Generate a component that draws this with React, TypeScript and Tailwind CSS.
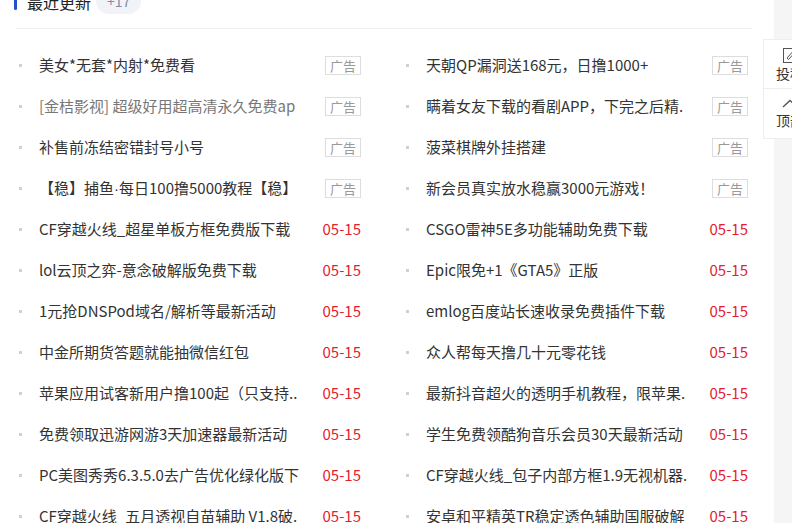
import React from "react"

type Item = { title: React.ReactNode; ad?: boolean; dim?: boolean; date?: string }

const dot = <span style={{ fontFamily: '"Liberation Sans", sans-serif' }}>·</span>

const left: Item[] = [
  { title: "美女*无套*内射*免费看", ad: true },
  { title: "[金桔影视] 超级好用超高清永久免费ap", ad: true, dim: true },
  { title: "补售前冻结密错封号小号", ad: true },
  { title: <>【稳】捕鱼{dot}每日100撸5000教程【稳】</>, ad: true },
  { title: "CF穿越火线_超星单板方框免费版下载", date: "05-15" },
  { title: "lol云顶之弈-意念破解版免费下载", date: "05-15" },
  { title: "1元抢DNSPod域名/解析等最新活动", date: "05-15" },
  { title: "中金所期货答题就能抽微信红包", date: "05-15" },
  { title: "苹果应用试客新用户撸100起（只支持..", date: "05-15" },
  { title: "免费领取迅游网游3天加速器最新活动", date: "05-15" },
  { title: "PC美图秀秀6.3.5.0去广告优化绿化版下", date: "05-15" },
  { title: "CF穿越火线_五月透视自苗辅助 V1.8破.", date: "05-15" },
]

const right: Item[] = [
  { title: "天朝QP漏洞送168元，日撸1000+", ad: true },
  { title: "瞒着女友下载的看剧APP，下完之后精.", ad: true },
  { title: "菠菜棋牌外挂搭建", ad: true },
  { title: "新会员真实放水稳赢3000元游戏！", ad: true },
  { title: "CSGO雷神5E多功能辅助免费下载", date: "05-15" },
  { title: "Epic限免+1《GTA5》正版", date: "05-15" },
  { title: "emlog百度站长速收录免费插件下载", date: "05-15" },
  { title: "众人帮每天撸几十元零花钱", date: "05-15" },
  { title: "最新抖音超火的透明手机教程，限苹果.", date: "05-15" },
  { title: "学生免费领酷狗音乐会员30天最新活动", date: "05-15" },
  { title: "CF穿越火线_包子内部方框1.9无视机器.", date: "05-15" },
  { title: "安卓和平精英TR稳定透色辅助国服破解", date: "05-15" },
]

function Row({ item }: { item: Item }) {
  return (
    <li className="flex h-[41px] items-center pr-[4px]">
      <span className="ml-[3px] mr-[17px] h-[3px] w-[3px] shrink-0 bg-[#d0d0d0]" />
      <span
        className={
          "min-w-0 flex-1 overflow-hidden whitespace-nowrap pr-3 " +
          (item.dim ? "text-[#777]" : "text-[#333]")
        }
      >
        {item.title}
      </span>
      {item.ad ? (
        <span className="flex h-[19px] shrink-0 items-center border border-[#ddd] px-[4px] text-[13px] text-[#999]">
          广告
        </span>
      ) : (
        <span className="shrink-0 text-[#e5202e]">{item.date}</span>
      )}
    </li>
  )
}

function Column({ items }: { items: Item[] }) {
  return (
    <ul className="flex flex-col">
      {items.map((it, i) => (
        <Row key={i} item={it} />
      ))}
    </ul>
  )
}

export default function App() {
  return (
    <div
      className="relative h-[523px] w-[792px] overflow-hidden bg-[#f5f5f5] text-[15px]"
      style={{ fontFamily: '"Microsoft YaHei", "Noto Sans CJK SC", "Noto Sans", sans-serif' }}
    >
      <div className="flow-root h-full w-[774px] bg-white pl-[16px] pr-[22px]">
        {/* header */}
        <div className="-mt-[25px] flex h-[54px] items-center border-b border-[#f0f0f0]">
          <span className="-ml-[2px] h-[16px] w-[3px] rounded-sm bg-[#2452c8]" />
          <span className="ml-[10px] text-[16px] text-[#222]">最近更新</span>
          <span className="ml-[5px] rounded-full bg-[#f2f3f6] px-[11px] py-[2px] text-[14px] text-[#7f8fae]">
            +17
          </span>
        </div>

        <div className="mt-[16px] grid grid-cols-2 gap-x-[38px]">
          <Column items={left} />
          <Column items={right} />
        </div>
      </div>

      {/* side widget */}
      <div className="absolute left-[763px] top-[39px] w-[54px] border border-[#eee] bg-white text-[14px] text-[#333]">
        <div className="flex h-[49px] flex-col items-center justify-center border-b border-[#eee] pt-[2px]">
          <svg width="15" height="15" viewBox="0 0 15 15" fill="none" stroke="#555" strokeWidth="1">
            <rect x="0.5" y="0.5" width="14" height="14" />
            <path d="M4 10 L9 4.5 L10.5 6 L5.5 11.5 Z" />
          </svg>
          <span className="mt-[1px] leading-[18px]">投稿</span>
        </div>
        <div className="flex h-[49px] flex-col items-center justify-center">
          <svg width="16" height="9" viewBox="0 0 16 9" fill="none" stroke="#555" strokeWidth="1.4">
            <path d="M1 8 L8 1.5 L15 8" />
          </svg>
          <span className="mt-[3px] leading-[18px]">顶部</span>
        </div>
      </div>
    </div>
  )
}
